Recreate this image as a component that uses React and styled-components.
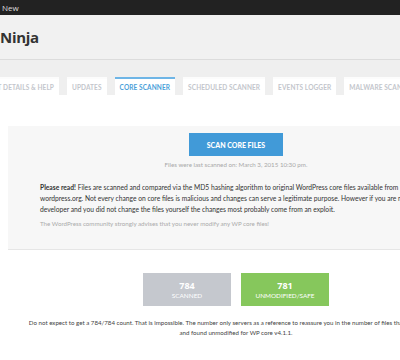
import React from 'react';
import styled, { createGlobalStyle } from 'styled-components';

const GlobalStyle = createGlobalStyle`
  html, body {
    margin: 0;
    padding: 0;
    background: #fff;
    overflow: hidden;
  }
  body {
    font-family: Lato, "Open Sans", "Liberation Sans", sans-serif;
    width: 400px;
  }
`;

const TopBar = styled.div`
  height: 15px;
  background: #222;
  color: #ddd;
  font-family: "Open Sans", sans-serif;
  font-size: 8px;
  line-height: 15px;
  padding-left: 2px;
`;

const Header = styled.div`
  height: 44px;
  background: #f1f1f1;
  border-bottom: 1px solid #dcdcdc;
  display: flex;
  align-items: center;
`;

const Title = styled.h1`
  margin: 0;
  font-family: "Open Sans", sans-serif;
  font-size: 15px;
  letter-spacing: -0.3px;
  font-weight: 700;
  color: #333;
  white-space: nowrap;
`;

const TabArea = styled.div`
  background: #efefef;
  padding-top: 17px;
  display: flex;
  gap: 8px;
  white-space: nowrap;
`;

const Tab = styled.div`
  height: 18px;
  box-sizing: border-box;
  padding: 0 5px;
  display: flex;
  align-items: center;
  flex-shrink: 0;
  background: #fff;
  font-size: 6.5px;
  font-weight: 700;
  letter-spacing: 0.1px;
  color: ${p => (p.$active ? '#4a9fd9' : '#c3c6cc')};
  border-top: 2px solid ${p => (p.$active ? '#6eb5e6' : '#fcfcfc')};
  ${p => p.$cut && `
    width: 59px;
    justify-content: flex-end;
    overflow: hidden;
  `}
`;

const Main = styled.div`
  margin-left: 8px;
  width: 456px;
  padding-top: 31px;
`;

const Panel = styled.div`
  background: #f7f7f7;
  border-bottom: 1px solid #e6e6e6;
  padding: 7px 0 22px;
  display: flex;
  flex-direction: column;
  align-items: center;
`;

const ScanButton = styled.button`
  width: 94px;
  height: 23px;
  border: none;
  background: #419ad8;
  color: #fff;
  font-family: inherit;
  font-size: 7px;
  font-weight: 900;
  padding: 0;
`;

const LastScan = styled.div`
  margin-top: 5px;
  font-size: 6.2px;
  color: #a8a8a8;
`;

const Notice = styled.p`
  align-self: flex-start;
  width: 392px;
  margin: 14px 0 0;
  padding-left: 32px;
  font-size: 6.7px;
  line-height: 11px;
  color: #333;
  b { font-weight: 700; }
`;

const Advice = styled.p`
  align-self: stretch;
  margin: 5px 0 0;
  padding-left: 32px;
  font-size: 6.2px;
  color: #aaa;
`;

const Stats = styled.div`
  margin-top: 23px;
  display: flex;
  justify-content: center;
  gap: 10px;
`;

const StatBox = styled.div`
  width: 88px;
  height: 33px;
  background: ${p => p.$color};
  color: #fff;
  display: flex;
  flex-direction: column;
  align-items: center;
  justify-content: center;
`;

const StatNum = styled.div`
  font-family: "Open Sans", sans-serif;
  font-size: 9px;
  font-weight: 700;
  line-height: 11px;
`;

const StatLabel = styled.div`
  font-size: 6.4px;
  line-height: 9px;
`;

const Footnote = styled.p`
  margin: 12px auto 0;
  width: 420px;
  text-align: center;
  font-size: 6.15px;
  line-height: 10px;
  color: #444;
`;

export default function App() {
  return (
    <>
      <GlobalStyle />
      <TopBar>New</TopBar>
      <Header>
        <Title>Ninja</Title>
      </Header>
      <TabArea>
        <Tab $cut>PRODUCT DETAILS &amp; HELP</Tab>
        <Tab>UPDATES</Tab>
        <Tab $active>CORE SCANNER</Tab>
        <Tab>SCHEDULED SCANNER</Tab>
        <Tab>EVENTS LOGGER</Tab>
        <Tab>MALWARE SCANNER</Tab>
      </TabArea>
      <Main>
        <Panel>
          <ScanButton>SCAN CORE FILES</ScanButton>
          <LastScan>Files were last scanned on: March 3, 2015 10:30 pm.</LastScan>
          <Notice>
            <b>Please read!</b> Files are scanned and compared via the MD5 hashing algorithm to original WordPress core files available from wordpress.org. Not every change on core files is malicious and changes can serve a legitimate purpose. However if you are not a developer and you did not change the files yourself the changes most probably come from an exploit.
          </Notice>
          <Advice>The WordPress community strongly advises that you never modify any WP core files!</Advice>
        </Panel>
        <Stats>
          <StatBox $color="#c5c8ce">
            <StatNum>784</StatNum>
            <StatLabel>SCANNED</StatLabel>
          </StatBox>
          <StatBox $color="#86c75c">
            <StatNum>781</StatNum>
            <StatLabel>UNMODIFIED/SAFE</StatLabel>
          </StatBox>
        </Stats>
        <Footnote>
          Do not expect to get a 784/784 count. That is impossible. The number only servers as a reference to reassure you in the number of files that were scanned and found unmodified for WP core v4.1.1.
        </Footnote>
      </Main>
    </>
  );
}
